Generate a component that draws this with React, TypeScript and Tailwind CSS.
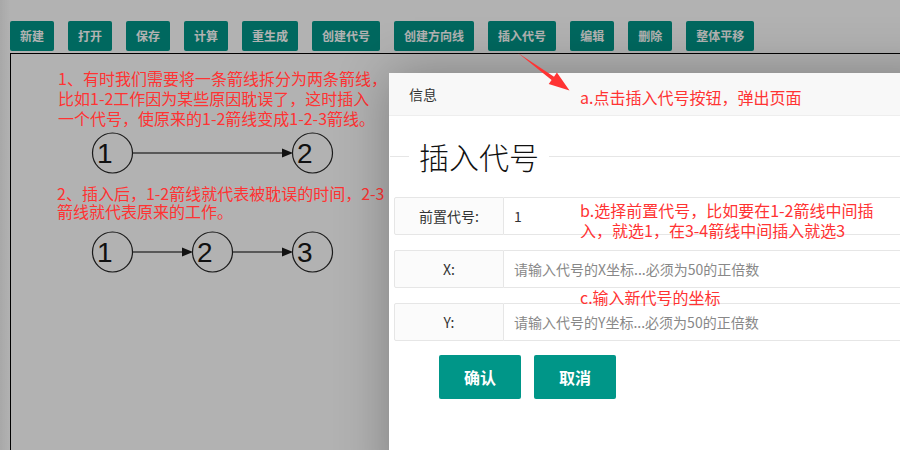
import React from 'react'

const tools = ['新建', '打开', '保存', '计算', '重生成', '创建代号', '创建方向线', '插入代号', '编辑', '删除', '整体平移']

const fields = [
  { label: '前置代号:', value: '1', placeholder: '' },
  { label: 'X:', value: '', placeholder: '请输入代号的X坐标...必须为50的正倍数' },
  { label: 'Y:', value: '', placeholder: '请输入代号的Y坐标...必须为50的正倍数' },
]

function Node({ cx, label }: { cx: number; label: string }) {
  return (
    <g>
      <circle cx={cx} cy={22} r={20} fill="none" stroke="#1a1a1a" strokeWidth={1.2} />
      <text x={cx - 15.5} y={32} fontSize={28} fontFamily="'Liberation Sans', Arial, sans-serif" fill="#111">
        {label}
      </text>
    </g>
  )
}

function Arrow({ from, to }: { from: number; to: number }) {
  return (
    <g>
      <line x1={from} y1={22} x2={to - 10} y2={22} stroke="#3a3a3a" strokeWidth={1.5} />
      <polygon points={`${to - 11},17.5 ${to},22 ${to - 11},26.5`} fill="#111" />
    </g>
  )
}

export default function App() {
  return (
    <div className="relative h-[450px] w-[900px] overflow-hidden bg-[linear-gradient(to_right,#f1f1f1,#fff_10px)] font-['Noto_Sans_CJK_SC',sans-serif]">
      {/* toolbar */}
      <div className="flex gap-[14px] pl-[10px] pt-[21px]">
        {tools.map((t) => (
          <button
            key={t}
            className="h-[30px] rounded-[2px] bg-[#009688] px-[10px] text-[12px] font-bold leading-[30px] text-white"
          >
            {t}
          </button>
        ))}
      </div>

      {/* drawing canvas */}
      <div className="ml-[10px] mt-[2px] h-[400px] border-l border-t border-black" />

      {/* layer shade */}
      <div className="absolute inset-0 bg-black/30" />

      {/* notes drawn over the canvas */}
      <div className="absolute left-[11px] top-[54px] flex flex-col pl-[47px] text-[16px] text-[#ff3333]">
        <p className="mt-[14px] whitespace-nowrap leading-[20px]">
          1、有时我们需要将一条箭线拆分为两条箭线，
          <br />
          比如1-2工作因为某些原因耽误了，这时插入
          <br />
          一个代号，使原来的1-2箭线变成1-2-3箭线。
        </p>
        <svg width="300" height="44" className="ml-[2px] mt-[3px]">
          <Node cx={52.5} label="1" />
          <Arrow from={73} to={233} />
          <Node cx={252.5} label="2" />
        </svg>
        <p className="-ml-[1px] mt-[9px] whitespace-nowrap leading-[18px]">
          2、插入后，1-2箭线就代表被耽误的时间，2-3
          <br />
          箭线就代表原来的工作。
        </p>
        <svg width="300" height="44" className="ml-[2px] mt-[10px]">
          <Node cx={52.5} label="1" />
          <Arrow from={73} to={133} />
          <Node cx={152.5} label="2" />
          <Arrow from={173} to={233} />
          <Node cx={252.5} label="3" />
        </svg>
      </div>

      {/* dialog */}
      <div className="absolute left-[389px] top-[73px] h-[420px] w-[560px] bg-white shadow-[1px_1px_50px_rgba(0,0,0,0.3)]">
        <div className="h-[43px] border-b border-[#eee] bg-[#f8f8f8] pl-[20px] text-[14px] leading-[42px] text-[#333]">
          信息
        </div>
        <div className="mt-[20px] flex h-[40px] items-center">
          <div className="ml-[1px] h-px w-[19px] bg-[#e6e6e6]" />
          <span className="px-[10px] text-[30px] font-light leading-[40px] text-[#111]">插入代号</span>
          <div className="h-px flex-1 bg-[#e6e6e6]" />
        </div>
        <div className="ml-[5px] mt-[21px] flex flex-col gap-[15px]">
          {fields.map((f) => (
            <div key={f.label} className="flex h-[38px] text-[14px]">
              <label className="w-[110px] shrink-0 rounded-l-[2px] border border-[#e6e6e6] bg-[#fbfbfb] text-center leading-[36px] text-[#333]">
                {f.label}
              </label>
              <input
                readOnly
                value={f.value}
                placeholder={f.placeholder}
                className="flex-1 border border-l-0 border-[#e6e6e6] bg-white pl-[10px] text-[14px] text-[#333] outline-none placeholder:text-[#888]"
              />
            </div>
          ))}
        </div>
        <div className="ml-[50px] mt-[14px] flex gap-[13px]">
          <button className="h-[44px] w-[82px] rounded-[2px] bg-[#009688] text-[16px] font-bold text-white">确认</button>
          <button className="h-[44px] w-[82px] rounded-[2px] bg-[#009688] text-[16px] font-bold text-white">取消</button>
        </div>
      </div>

      {/* callouts on top of the dialog */}
      <svg className="absolute left-0 top-0" width="900" height="120">
        <polygon
          points="518,53 554,76.7 556.9,72.6 569.5,90.5 548.7,84 551.6,79.9"
          fill="#ff3333"
        />
      </svg>
      <p className="absolute left-[580px] top-[87px] whitespace-nowrap text-[16px] leading-[20px] text-[#ff3333]">
        a.点击插入代号按钮，弹出页面
      </p>
      <p className="absolute left-[580px] top-[200px] whitespace-nowrap text-[16px] leading-[20px] text-[#ff3333]">
        b.选择前置代号，比如要在1-2箭线中间插
        <br />
        入，就选1，在3-4箭线中间插入就选3
      </p>
      <p className="absolute left-[580px] top-[287px] whitespace-nowrap text-[16px] leading-[20px] text-[#ff3333]">
        c.输入新代号的坐标
      </p>
    </div>
  )
}
